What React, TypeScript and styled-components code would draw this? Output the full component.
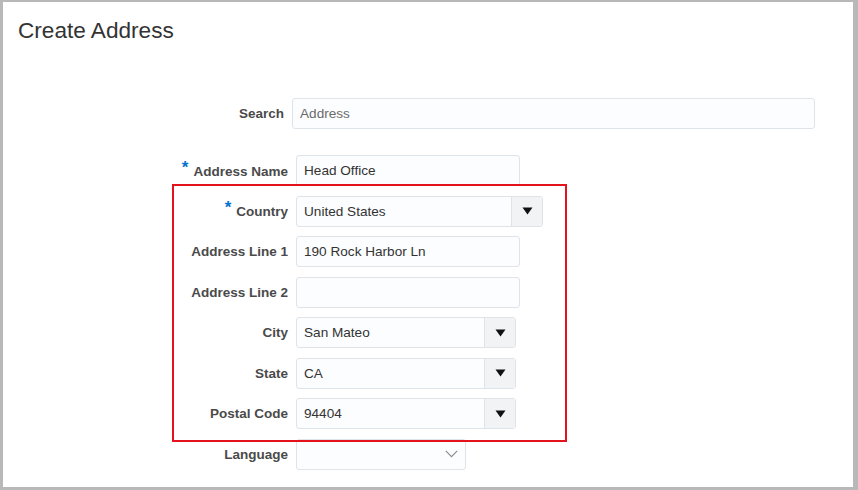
import styled, { createGlobalStyle } from 'styled-components';

const GlobalStyle = createGlobalStyle`
    html, body {
        margin: 0;
        padding: 0;
        background: #ffffff;
    }
    body {
        font-family: 'Liberation Sans', Arial, sans-serif;
    }
`;

const Frame = styled.div`
    box-sizing: border-box;
    width: 858px;
    height: 490px;
    background: #ffffff;
    border-style: solid;
    border-color: #b8b8b8;
    border-width: 2px 5px 3px 3px;
    overflow: hidden;
`;

const Title = styled.h1`
    margin: 16px 0 0 15px;
    font-size: 22.6px;
    line-height: 26px;
    font-weight: 400;
    color: #333333;
`;

const Form = styled.div`
    display: flex;
    flex-direction: column;
    gap: 9.5px;
`;

const Row = styled.div<{ $labelWidth: number; $space?: number }>`
    display: grid;
    grid-template-columns: ${(p) => p.$labelWidth}px auto;
    column-gap: 8px;
    align-items: center;
    height: 31px;
    margin-top: ${(p) => p.$space || 0}px;
`;

const Label = styled.label`
    justify-self: end;
    font-size: 13.5px;
    font-weight: 700;
    color: #4a4a4a;
    white-space: nowrap;
`;

const Required = styled.span`
    position: relative;
    top: -3px;
    margin-right: 5px;
    font-size: 17px;
    font-weight: 700;
    color: #0572ce;
`;

const Field = styled.div<{ $width: number }>`
    box-sizing: border-box;
    display: flex;
    align-items: stretch;
    width: ${(p) => p.$width}px;
    height: 31px;
    background: #fcfdfe;
    border: 1px solid #dfe4e9;
    border-radius: 3px;
    overflow: hidden;
`;

const Value = styled.span<{ $placeholder?: boolean }>`
    flex: 1;
    display: flex;
    align-items: center;
    padding-left: 7px;
    font-size: 13.6px;
    color: ${(p) => (p.$placeholder ? '#6a6a6a' : '#333333')};
    white-space: nowrap;
`;

const DropButton = styled.span`
    box-sizing: border-box;
    width: 31px;
    display: flex;
    align-items: center;
    justify-content: center;
    background: #f1f3f5;
    border-left: 1px solid #dfe4e9;
`;

const Chevron = styled.span`
    width: 28px;
    display: flex;
    align-items: center;
    justify-content: center;
`;

const Group = styled.div`
    position: relative;
    display: flex;
    flex-direction: column;
    gap: 9.5px;
`;

const Highlight = styled.div`
    position: absolute;
    top: -12px;
    left: 169px;
    width: 395px;
    height: 258px;
    box-sizing: border-box;
    border: 2px solid #e3121d;
    pointer-events: none;
`;

const Triangle = () => (
    <svg width="11" height="8" viewBox="0 0 11 8">
        <path d="M0.5 0.5 H10.5 L5.5 7.5 Z" fill="#111" />
    </svg>
);

const ChevronDown = () => (
    <svg width="13" height="8" viewBox="0 0 13 8">
        <path d="M0.8 0.8 L6.5 6.6 L12.2 0.8" fill="none" stroke="#8a8a8a" strokeWidth="1.1" />
    </svg>
);

type Combo = { label: string; value: string; width: number; required?: boolean };

const comboRows: Combo[] = [
    { label: 'Country', value: 'United States', width: 247, required: true },
];

const addressLines = [
    { label: 'Address Line 1', value: '190 Rock Harbor Ln' },
    { label: 'Address Line 2', value: '' },
];

const lookups = [
    { label: 'City', value: 'San Mateo' },
    { label: 'State', value: 'CA' },
    { label: 'Postal Code', value: '94404' },
];

const App = () => {
    return (
        <>
            <GlobalStyle />
            <Frame>
                <Title>Create Address</Title>
                <Form>
                    <Row $labelWidth={281} $space={54}>
                        <Label>Search</Label>
                        <Field $width={523}>
                            <Value $placeholder>Address</Value>
                        </Field>
                    </Row>
                    <Row $labelWidth={285} $space={16.5}>
                        <Label>
                            <Required>*</Required>Address Name
                        </Label>
                        <Field $width={224}>
                            <Value>Head Office</Value>
                        </Field>
                    </Row>
                    <Group>
                        <Highlight />
                        {comboRows.map((row) => (
                            <Row $labelWidth={285} key={row.label}>
                                <Label>
                                    {row.required && <Required>*</Required>}
                                    {row.label}
                                </Label>
                                <Field $width={row.width}>
                                    <Value>{row.value}</Value>
                                    <DropButton>
                                        <Triangle />
                                    </DropButton>
                                </Field>
                            </Row>
                        ))}
                        {addressLines.map((row) => (
                            <Row $labelWidth={285} key={row.label}>
                                <Label>{row.label}</Label>
                                <Field $width={224}>
                                    <Value>{row.value}</Value>
                                </Field>
                            </Row>
                        ))}
                        {lookups.map((row) => (
                            <Row $labelWidth={285} key={row.label}>
                                <Label>{row.label}</Label>
                                <Field $width={220}>
                                    <Value>{row.value}</Value>
                                    <DropButton>
                                        <Triangle />
                                    </DropButton>
                                </Field>
                            </Row>
                        ))}
                    </Group>
                    <Row $labelWidth={285}>
                        <Label>Language</Label>
                        <Field $width={170}>
                            <Value />
                            <Chevron>
                                <ChevronDown />
                            </Chevron>
                        </Field>
                    </Row>
                </Form>
            </Frame>
        </>
    );
};

export default App;
